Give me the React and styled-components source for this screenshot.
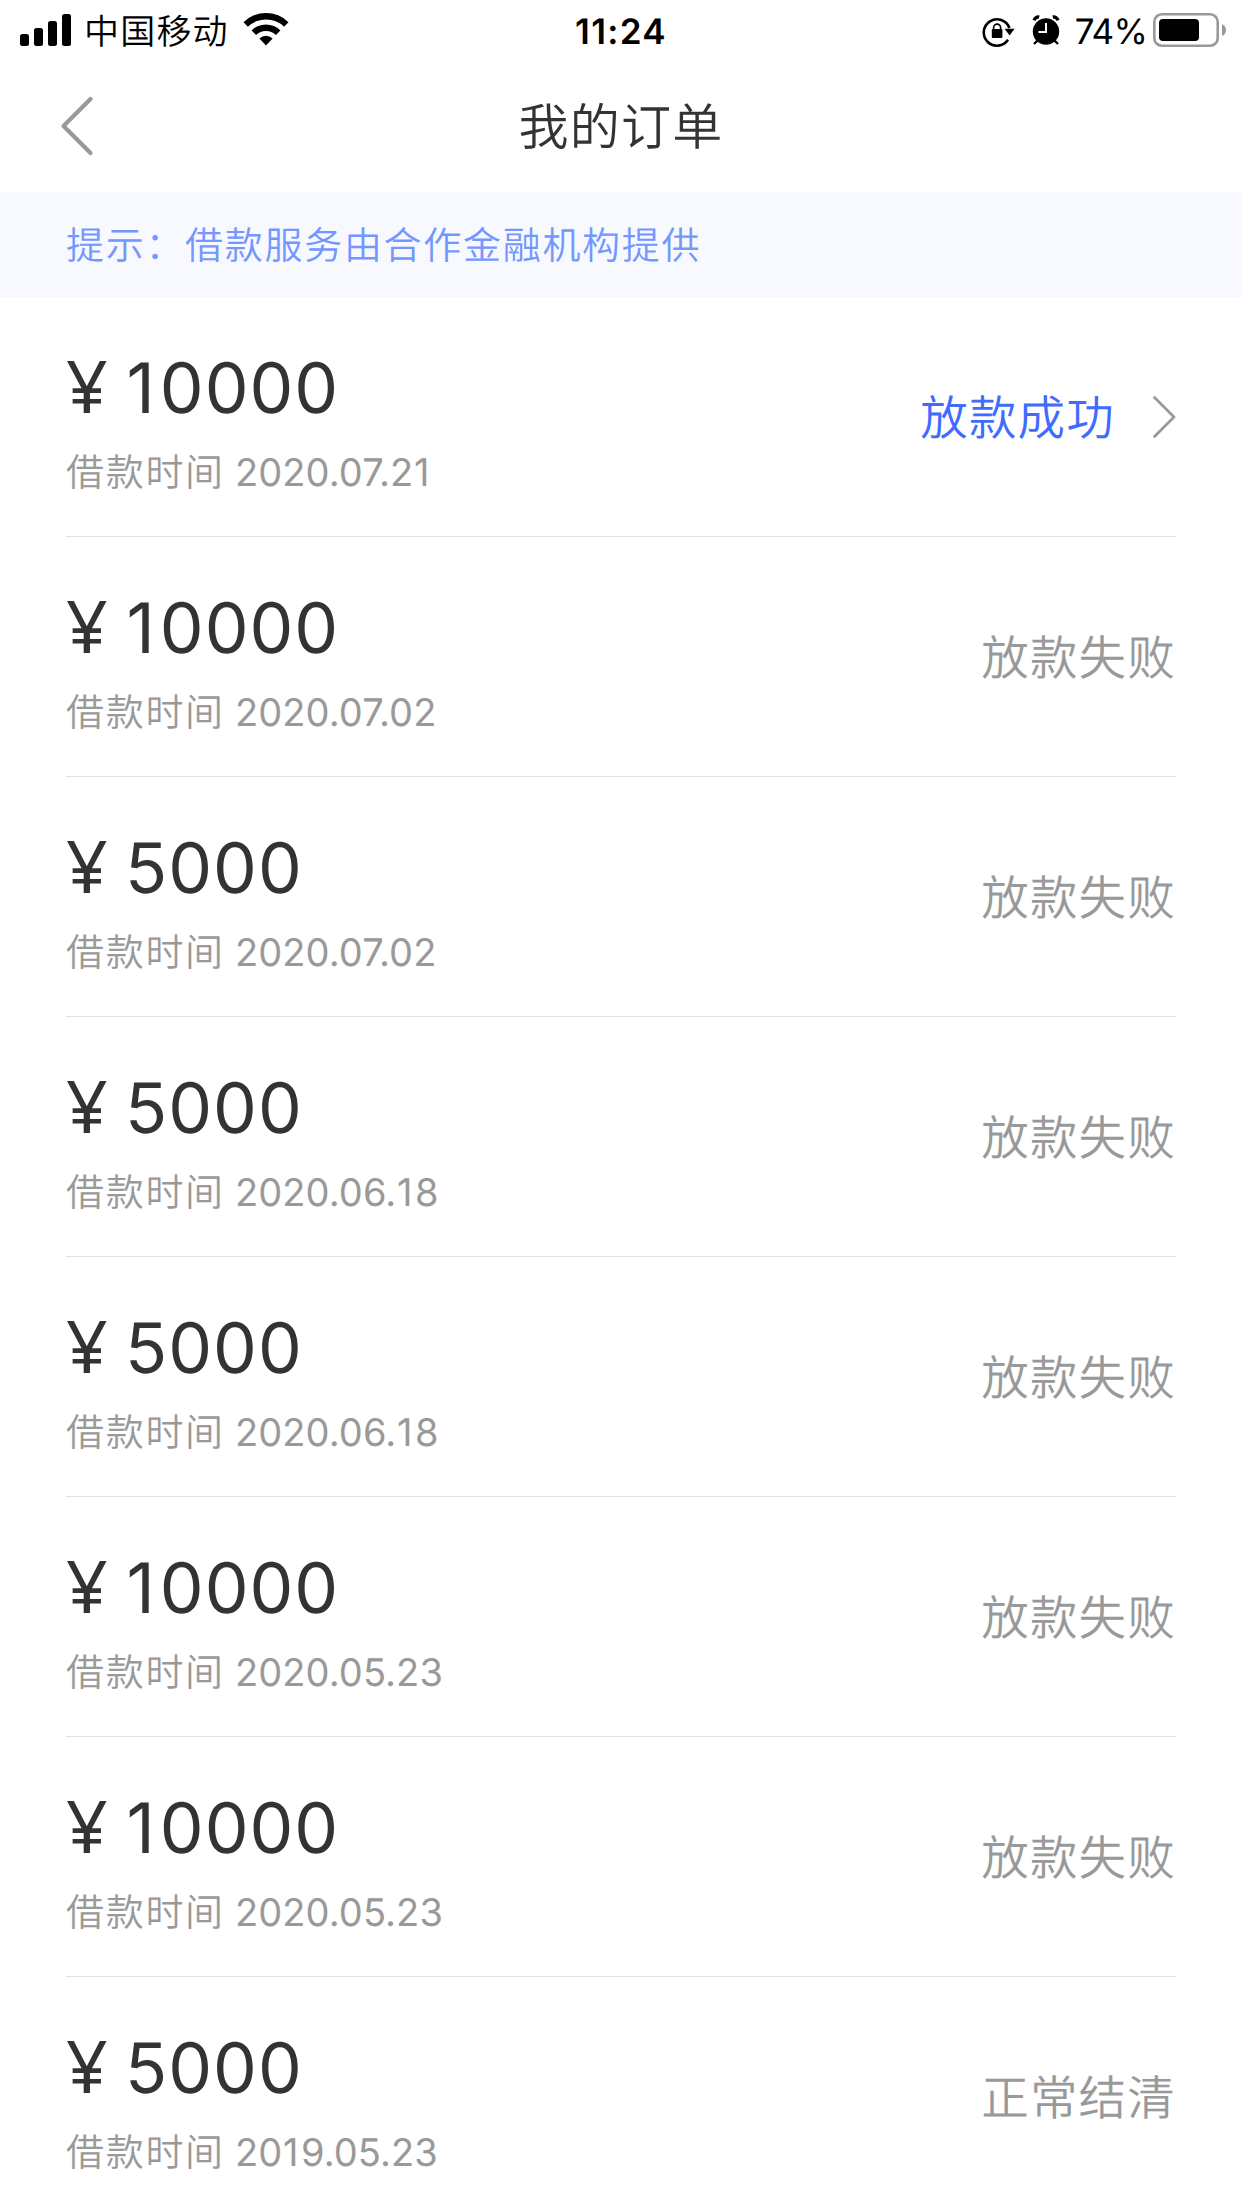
import React from "react";
import styled, { createGlobalStyle } from "styled-components";

const GlobalStyle = createGlobalStyle`
  * {
    box-sizing: border-box;
  }

  body {
    margin: 0;
    background: #fff;
    color: #333;
    font-family: Inter, "Noto Sans CJK SC", sans-serif;
    text-rendering: geometricPrecision;
  }
`;

const Page = styled.div`
  width: 1242px;
  height: 2208px;
  overflow: hidden;
  background: #fff;
`;

const StatusBar = styled.div`
  display: grid;
  grid-template-columns: 1fr auto 1fr;
  align-items: center;
  height: 60px;
  padding: 0 16px 0 20px;
  color: #000;
`;

const StatusLeft = styled.div`
  display: flex;
  align-items: center;
`;

const StatusRight = styled.div`
  display: flex;
  align-items: center;
  justify-content: flex-end;
`;

const Carrier = styled.span`
  padding-top: 5px;
  margin: 0 14px 0 12px;
  font-size: 35px;
  font-weight: 350;
  line-height: 55px;
  letter-spacing: 1.2px;
`;

const Clock = styled.span`
  padding: 5px 4px 0 0;
  font-size: 35px;
  font-weight: 600;
  line-height: 55px;
  letter-spacing: 1.3px;
`;

const Percent = styled.span`
  padding-top: 5px;
  margin: 0 6px 0 15px;
  font-size: 35px;
  line-height: 55px;
  letter-spacing: -0.8px;
`;

const Header = styled.header`
  display: grid;
  grid-template-columns: 120px 1fr 120px;
  align-items: center;
  height: 132px;
`;

const BackButton = styled.button`
  display: flex;
  padding: 0 0 0 58px;
  border: 0;
  background: none;
`;

const Title = styled.h1`
  margin: 0;
  padding-top: 5px;
  font-size: 50px;
  font-weight: 350;
  line-height: 127px;
  letter-spacing: 1.3px;
  text-align: center;
`;

const Notice = styled.div`
  height: 105px;
  padding: 3px 66px 0;
  background: #f8f9ff;
  color: #7397ff;
  font-size: 38px;
  font-weight: 350;
  line-height: 102px;
  letter-spacing: 1.7px;
`;

const OrderList = styled.ul`
  margin: 0;
  padding: 0 66px;
  list-style: none;
`;

const OrderItem = styled.li`
  display: flex;
  justify-content: space-between;
  align-items: center;
  height: 240px;
  border-bottom: 1px solid #e2e2e2;
`;

const OrderInfo = styled.div`
  padding-top: 12px;
`;

const Amount = styled.div`
  display: flex;
  height: 90px;
  font-size: 69.5px;
  line-height: 90px;
  letter-spacing: 1px;
`;

const Currency = styled.span`
  width: 59px;
  font-family: "Noto Sans", sans-serif;
  font-size: 73px;
  line-height: 86px;
`;

const LoanTime = styled.div`
  display: flex;
  margin-top: 10px;
  color: #999;
  font-size: 38px;
  line-height: 60px;
  letter-spacing: 0.1px;
`;

const TimeLabel = styled.span`
  width: 169px;
  font-weight: 350;
  letter-spacing: 1.7px;
`;

const One = styled.span`
  padding: 0 0.06em 0 0.02em;
`;

const Result = styled.div`
  display: flex;
  align-items: center;
  padding-top: 4px;
  color: ${(props) => (props.$success ? "#3f6bff" : "#999")};
  font-size: 47.5px;
  font-weight: 350;
  line-height: 60px;
  letter-spacing: 1.2px;

  svg {
    margin: -4px 0 0 37px;
  }
`;

const SignalIcon = () => (
  <svg width="52" height="60" viewBox="0 0 52 60">
    <rect x="0" y="34" width="9" height="12" rx="2.5" />
    <rect x="14" y="28" width="9" height="18" rx="2.5" />
    <rect x="28" y="21" width="9" height="25" rx="2.5" />
    <rect x="42" y="14" width="9" height="32" rx="2.5" />
  </svg>
);

const WifiIcon = () => (
  <svg width="46" height="60" viewBox="0 0 46 60">
    <path d="M0.5 22.2a32 32 0 0 1 45 0l-4.4 4.6a26 26 0 0 0-36.2 0z" />
    <path d="M8.6 30.4a20.5 20.5 0 0 1 28.8 0l-4.5 4.7a14 14 0 0 0-19.8 0z" />
    <path d="M16.4 38.4a9.5 9.5 0 0 1 13.2 0L23 45.5z" />
  </svg>
);

const LockSvg = styled.svg`
  margin-right: 16px;
`;

const LockIcon = () => (
  <LockSvg width="34" height="60" viewBox="0 0 34 60">
    <path
      d="M26 39.8A13.2 13.2 0 1 1 27.4 28"
      fill="none"
      stroke="#000"
      strokeWidth="2.6"
    />
    <path d="M22.6 28.8h10l-5 6.8z" />
    <rect x="9.8" y="29" width="10.6" height="9" rx="1" />
    <path
      d="M11.6 30v-2.4a3.5 3.5 0 0 1 7 0V30"
      fill="none"
      stroke="#000"
      strokeWidth="1.6"
    />
  </LockSvg>
);

const AlarmIcon = () => (
  <svg width="28" height="60" viewBox="0 0 28 60">
    <circle cx="14" cy="31.5" r="13.2" />
    <path
      d="M2.2 20.4a4 4 0 0 1 5-3.2M25.8 20.4a4 4 0 0 0-5-3.2"
      fill="none"
      stroke="#000"
      strokeWidth="3.4"
    />
    <path
      d="M5.5 40.5L2 44M22.5 40.5L26 44"
      fill="none"
      stroke="#000"
      strokeWidth="2.4"
    />
    <path d="M14 23v9H6.5" fill="none" stroke="#fff" strokeWidth="2" />
  </svg>
);

const BatteryIcon = () => (
  <svg width="73" height="60" viewBox="0 0 73 60">
    <rect
      x="1.3"
      y="14.3"
      width="63.4"
      height="31.4"
      rx="7.5"
      fill="none"
      stroke="#999"
      strokeWidth="2.6"
    />
    <rect x="6" y="19" width="40" height="22" rx="4" />
    <path d="M69 24q4 2 4 6t-4 6z" fill="#999" />
  </svg>
);

const BackIcon = () => (
  <svg width="36" height="64" viewBox="0 0 36 64">
    <path
      d="M32.5 5L5.5 32l27 27"
      fill="none"
      stroke="#999"
      strokeWidth="4.2"
      strokeLinecap="round"
      strokeLinejoin="round"
    />
  </svg>
);

const ArrowIcon = () => (
  <svg width="24" height="44" viewBox="0 0 24 44">
    <path
      d="M2.5 2.5L22 22 2.5 41.5"
      fill="none"
      stroke="#999"
      strokeWidth="2.8"
      strokeLinecap="round"
      strokeLinejoin="round"
    />
  </svg>
);

// the "1" of Inter is narrow, give it some room
const Digits = ({ value }) => (
  <span>
    {value
      .split(/(1)/)
      .map((part, index) => (part === "1" ? <One key={index}>1</One> : part))}
  </span>
);

const App = () => {
  const orders = [
    { amount: "10000", date: "2020.07.21", result: "放款成功", success: true },
    { amount: "10000", date: "2020.07.02", result: "放款失败" },
    { amount: "5000", date: "2020.07.02", result: "放款失败" },
    { amount: "5000", date: "2020.06.18", result: "放款失败" },
    { amount: "5000", date: "2020.06.18", result: "放款失败" },
    { amount: "10000", date: "2020.05.23", result: "放款失败" },
    { amount: "10000", date: "2020.05.23", result: "放款失败" },
    { amount: "5000", date: "2019.05.23", result: "正常结清" },
  ];

  return (
    <Page>
      <GlobalStyle />
      <StatusBar>
        <StatusLeft>
          <SignalIcon />
          <Carrier>中国移动</Carrier>
          <WifiIcon />
        </StatusLeft>
        <Clock>11:24</Clock>
        <StatusRight>
          <LockIcon />
          <AlarmIcon />
          <Percent>74%</Percent>
          <BatteryIcon />
        </StatusRight>
      </StatusBar>
      <Header>
        <BackButton>
          <BackIcon />
        </BackButton>
        <Title>我的订单</Title>
      </Header>
      <Notice>提示：借款服务由合作金融机构提供</Notice>
      <OrderList>
        {orders.map((order, index) => (
          <OrderItem key={index}>
            <OrderInfo>
              <Amount>
                <Currency>¥</Currency>
                <Digits value={order.amount} />
              </Amount>
              <LoanTime>
                <TimeLabel>借款时间</TimeLabel>
                <Digits value={order.date} />
              </LoanTime>
            </OrderInfo>
            <Result $success={order.success}>
              {order.result}
              {order.success && <ArrowIcon />}
            </Result>
          </OrderItem>
        ))}
      </OrderList>
    </Page>
  );
};

export default App;
